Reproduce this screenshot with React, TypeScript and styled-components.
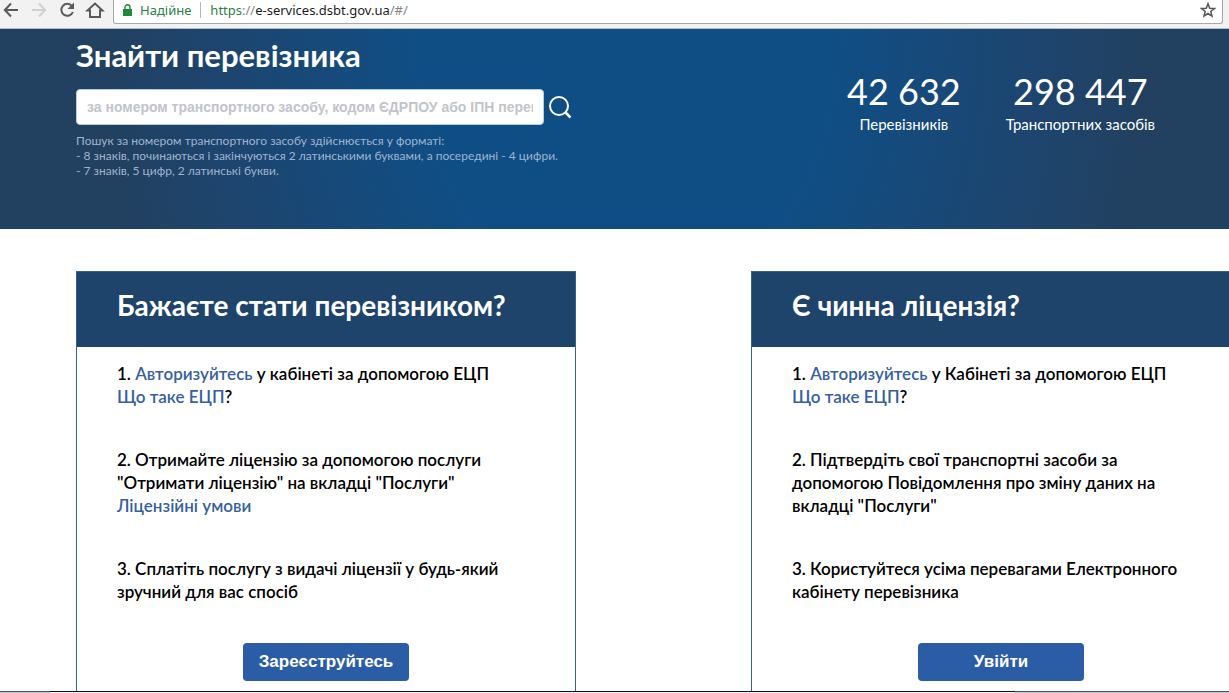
import React from 'react';
import styled, { createGlobalStyle } from 'styled-components';

const GlobalStyle = createGlobalStyle`
  *, *::before, *::after { box-sizing: border-box; }
  body {
    margin: 0;
    background: #fff;
    color: #000;
    font-family: Lato, "Open Sans", sans-serif;
  }
  h1, h2, p, ol, dl, dd { margin: 0; padding: 0; }
`;

const Page = styled.div`
  display: flex;
  flex-direction: column;
  height: 100vh;
  overflow: hidden;
`;

const BrowserBar = styled.header`
  display: flex;
  flex: none;
  height: 29px;
  padding-right: 6px;
  background: #f2f2f2;
  border-bottom: 1px solid #b4bcc4;
`;

const NavButtons = styled.nav`
  display: flex;
  flex: none;
  width: 113px;
  height: 20px;
  padding-left: 1px;
  gap: 8px;
`;

const NavButton = styled.button`
  width: 20px;
  height: 20px;
  padding: 0;
  border: 0;
  background: none;
  color: #5a5a5a;
  &:disabled { color: #d0d0d0; }
  svg { display: block; }
`;

const AddressBox = styled.form`
  display: flex;
  flex: 1;
  align-items: center;
  height: 24px;
  padding: 0 6px 3px 9px;
  gap: 9px;
  background: #fff;
  border: 1px solid #a9a9a9;
  border-top: 0;
  border-radius: 0 0 3px 3px;
  font: 13px/20px "Noto Sans", sans-serif;
`;

const Secure = styled.span`
  display: flex;
  align-items: center;
  gap: 8px;
  padding-right: 9px;
  border-right: 1px solid #b5b5b5;
  color: #2b8048;
  line-height: 16px;
`;

const Url = styled.span`
  flex: 1;
  color: #858585;
  em { color: #2b8048; font-style: normal; }
  strong { color: #1c1c1c; font-weight: 400; }
`;

const Hero = styled.section`
  display: flex;
  flex: none;
  justify-content: space-between;
  height: 200px;
  padding: 8px 74px 0 76px;
  color: #fff;
  background: radial-gradient(ellipse 600px 800px at 51% 0, #0f4e85 0%, #0f4e85 34%, #164a7b 50%, #1d456f 68%, #22405f 88%);
`;

const Title = styled.h1`
  font-size: 31px;
  line-height: 36px;
  font-weight: 700;
`;

const SearchForm = styled.form`
  display: flex;
  align-items: center;
  gap: 4px;
  margin-top: 16px;
`;

const SearchInput = styled.input`
  width: 468px;
  height: 36px;
  padding: 0 10px;
  border: 1px solid #b5cde4;
  border-radius: 4px;
  background: #fff;
  font: bold 14px "Liberation Sans", sans-serif;
  &::placeholder { color: #c1c4c9; opacity: 1; }
`;

const SearchButton = styled.button`
  padding: 0;
  border: 0;
  background: none;
  color: #fff;
  svg { display: block; }
`;

const Hint = styled.p`
  margin-top: 8px;
  font-size: 12px;
  line-height: 15px;
  color: #9fb4d0;
  white-space: pre-line;
`;

const Stats = styled.dl`
  display: flex;
  gap: 45px;
  padding-top: 31px;
`;

const Stat = styled.div`
  display: flex;
  flex-direction: column-reverse;
  justify-content: flex-end;
  text-align: center;
`;

const StatValue = styled.dd`
  font-size: 36px;
  line-height: 46px;
`;

const StatLabel = styled.dt`
  font-size: 15px;
  line-height: 20px;
`;

const Cards = styled.main`
  display: grid;
  flex: 1;
  grid-template-columns: 1fr 1fr;
  gap: 175px;
  margin-right: -22px;
  padding: 42px 0 0 76px;
  min-height: 0;
`;

const Card = styled.section`
  border: 1px solid #365f94;
  border-bottom: 0;
`;

const CardTitle = styled.h2`
  height: 75px;
  padding: 15px 40px;
  background: #1e446b;
  color: #fff;
  font-size: 28px;
  line-height: 36px;
  font-weight: 700;
`;

const CardBody = styled.div`
  display: flex;
  flex-direction: column;
  align-items: center;
  padding: 15px 40px 0;
`;

const Steps = styled.ol`
  display: flex;
  flex-direction: column;
  gap: 40px;
  width: 100%;
  list-style: none;
  font-size: 17px;
  line-height: 23px;
  font-weight: 600;
  white-space: nowrap;
`;

const Link = styled.a`
  color: #36609f;
  text-decoration: none;
`;

const ActionButton = styled.button`
  width: 166px;
  height: 38px;
  margin-top: 40px;
  padding: 0;
  border: 0;
  border-radius: 4px;
  background: #2b5ca6;
  color: #fff;
  font: bold 17px "Liberation Sans", sans-serif;
`;

const BottomEdge = styled.footer`
  display: grid;
  flex: none;
  grid-template-columns: 50fr 965fr 214fr;
  height: 2px;
`;

const EdgeSegment = styled.div<{ $active?: boolean }>`
  border-top: 1px solid ${(p) => (p.$active ? '#0c0f16' : '#44546a')};
  background: ${(p) => (p.$active ? '#f1f4f8' : '#bccad9')};
`;

const stroke = { fill: 'none', stroke: 'currentColor', strokeWidth: 2 };

export default function App() {
  return (
    <Page>
      <GlobalStyle />
      <BrowserBar>
        <NavButtons aria-label="Браузер">
          <NavButton type="button" aria-label="Назад">
            <svg width="20" height="20" viewBox="0 0 20 20" {...stroke}><path d="M17 10H4M10 3.5 3.8 10l6.2 6.5" /></svg>
          </NavButton>
          <NavButton type="button" aria-label="Вперед" disabled>
            <svg width="20" height="20" viewBox="0 0 20 20" {...stroke}><path d="M3 10h13M10 3.5l6.2 6.5-6.2 6.5" /></svg>
          </NavButton>
          <NavButton type="button" aria-label="Оновити">
            <svg width="20" height="20" viewBox="0 0 20 20" {...stroke}>
              <path d="M15 6A6 6 0 1 0 15.900 12" />
              <path d="M17 2.500V9h-6.500z" fill="currentColor" stroke="none" />
            </svg>
          </NavButton>
          <NavButton type="button" aria-label="Додому">
            <svg width="20" height="20" viewBox="0 0 20 20" {...stroke}><path d="M2.500 10.500 10 3.500l7.500 7H15V17H5v-6.500z" /></svg>
          </NavButton>
        </NavButtons>
        <AddressBox>
          <Secure>
            <svg width="9" height="12" viewBox="0 0 9 12" fill="#1d8a3c">
              <path d="M0 5h9v7H0z" />
              <path d="M2 6V3.200a2.500 2.500 0 0 1 5 0V6" fill="none" stroke="#1d8a3c" strokeWidth="1.400" />
            </svg>
            Надійне
          </Secure>
          <Url><em>https</em>://<strong>e-services.dsbt.gov.ua</strong>/#/</Url>
          <svg width="16" height="16" viewBox="0 0 16 16" fill="none" stroke="#555" strokeWidth="1.500">
            <path d="M8 1.800l1.700 4.400 4.700.3-3.600 3 1.200 4.600L8 11.500l-4 2.600 1.200-4.600-3.600-3 4.700-.3z" />
          </svg>
        </AddressBox>
      </BrowserBar>

      <Hero>
        <div>
          <Title>Знайти перевізника</Title>
          <SearchForm>
            <SearchInput
              type="text"
              aria-label="Пошук перевізника"
              placeholder="за номером транспортного засобу, кодом ЄДРПОУ або ІПН перевізника"
            />
            <SearchButton type="button" aria-label="Шукати">
              <svg width="24" height="24" viewBox="0 0 24 24" fill="none" stroke="currentColor" strokeWidth="2">
                <circle cx="11" cy="11" r="9" />
                <path d="m17.500 17.500 5 5" strokeWidth="2.500" />
              </svg>
            </SearchButton>
          </SearchForm>
          <Hint>
            {'Пошук за номером транспортного засобу здійснюється у форматі:\n- 8 знаків, починаються і закінчуються 2 латинськими буквами, а посередині - 4 цифри.\n- 7 знаків, 5 цифр, 2 латинські букви.'}
          </Hint>
        </div>
        <Stats>
          <Stat>
            <StatLabel>Перевізників</StatLabel>
            <StatValue>42 632</StatValue>
          </Stat>
          <Stat>
            <StatLabel>Транспортних засобів</StatLabel>
            <StatValue>298 447</StatValue>
          </Stat>
        </Stats>
      </Hero>

      <Cards>
        <Card>
          <CardTitle>Бажаєте стати перевізником?</CardTitle>
          <CardBody>
            <Steps>
              <li>1. <Link href="#/login">Авторизуйтесь</Link> у кабінеті за допомогою ЕЦП<br /><Link href="#/eds">Що таке ЕЦП</Link>?</li>
              <li>2. Отримайте ліцензію за допомогою послуги<br />"Отримати ліцензію" на вкладці "Послуги"<br /><Link href="#/terms">Ліцензійні умови</Link></li>
              <li>3. Сплатіть послугу з видачі ліцензії у будь-який<br />зручний для вас спосіб</li>
            </Steps>
            <ActionButton type="button">Зареєструйтесь</ActionButton>
          </CardBody>
        </Card>
        <Card>
          <CardTitle>Є чинна ліцензія?</CardTitle>
          <CardBody>
            <Steps>
              <li>1. <Link href="#/login">Авторизуйтесь</Link> у Кабінеті за допомогою ЕЦП<br /><Link href="#/eds">Що таке ЕЦП</Link>?</li>
              <li>2. Підтвердіть свої транспортні засоби за<br />допомогою Повідомлення про зміну даних на<br />вкладці "Послуги"</li>
              <li>3. Користуйтеся усіма перевагами Електронного<br />кабінету перевізника</li>
            </Steps>
            <ActionButton type="button">Увійти</ActionButton>
          </CardBody>
        </Card>
      </Cards>
      <BottomEdge>
        <EdgeSegment />
        <EdgeSegment $active />
        <EdgeSegment />
      </BottomEdge>
    </Page>
  );
}
